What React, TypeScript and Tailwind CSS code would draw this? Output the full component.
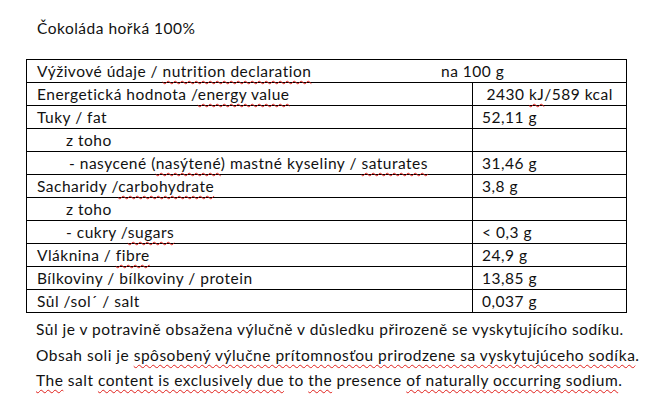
import React from "react";

const sq = "underline decoration-wavy decoration-[#e0201b] decoration-1 underline-offset-[3px]";

type Row = { label: React.ReactNode; value?: React.ReactNode; indent?: string };

const rows: Row[] = [
  { label: <>Energetická hodnota /<span className={sq}>energy value</span></>, value: <>&nbsp;2430 <span className={sq}>kJ</span>/589 kcal</> },
  { label: "Tuky / fat", value: "52,11 g" },
  { label: "z toho", indent: "pl-[39px]" },
  { label: <>- nasycené (<span className={sq}>nasýtené</span>) mastné kyseliny / <span className={sq}>saturates</span></>, value: "31,46 g", indent: "pl-[42px]" },
  { label: <>Sacharidy /<span className={sq}>carbohydrate</span></>, value: "3,8 g" },
  { label: "z toho", indent: "pl-[39px]" },
  { label: <>- cukry /<span className={sq}>sugars</span></>, value: "< 0,3 g", indent: "pl-[39px]" },
  { label: <>Vláknina / <span className={sq}>fibre</span></>, value: "24,9 g" },
  { label: "Bílkoviny / bílkoviny / protein", value: "13,85 g" },
  { label: "Sůl /sol´ / salt", value: "0,037 g" },
];

export default function App() {
  return (
    <div className="h-[405px] w-[664px] bg-white pl-[26px] pt-[18px] text-[15.5px] leading-[20px] tracking-[0.5px] text-[#111]" style={{ fontFamily: "Lato, 'Liberation Sans', sans-serif" }}>
      <p className="pl-[11px]">Čokoláda hořká 100%</p>
      <table className="mt-[21px] w-[600px] table-fixed border-collapse">
        <colgroup>
          <col className="w-[446px]" />
          <col className="w-[154px]" />
        </colgroup>
        <tbody>
          <tr className="h-[23px]">
            <td colSpan={2} className="border border-black p-0 pl-[10px]">
              <div className="flex">
                <span className="w-[404px]">
                  Výživové údaje / <span className={sq}>nutrition declaration</span>
                </span>
                <span>na 100 g</span>
              </div>
            </td>
          </tr>
          {rows.map((r, i) => (
            <tr key={i} className="h-[23px]">
              <td className={`border border-black p-0 ${r.indent ?? "pl-[10px]"}`}>{r.label}</td>
              <td className="border border-black p-0 pl-[9px]">{r.value}</td>
            </tr>
          ))}
        </tbody>
      </table>
      <div className="pl-[10px] pt-[4px] leading-[25.5px]">
        <p>Sůl je v potravině obsažena výlučně v důsledku přirozeně se vyskytujícího sodíku.</p>
        <p>
          Obsah soli je <span className={sq}>spôsobený výlučne prítomnosťou prirodzene sa vyskytujúceho sodíka</span>.
        </p>
        <p>
          <span className={sq}>The</span> salt <span className={sq}>content is exclusively due</span> to <span className={sq}>the</span> presence <span className={sq}>of naturally occurring sodium</span>.
        </p>
      </div>
    </div>
  );
}
